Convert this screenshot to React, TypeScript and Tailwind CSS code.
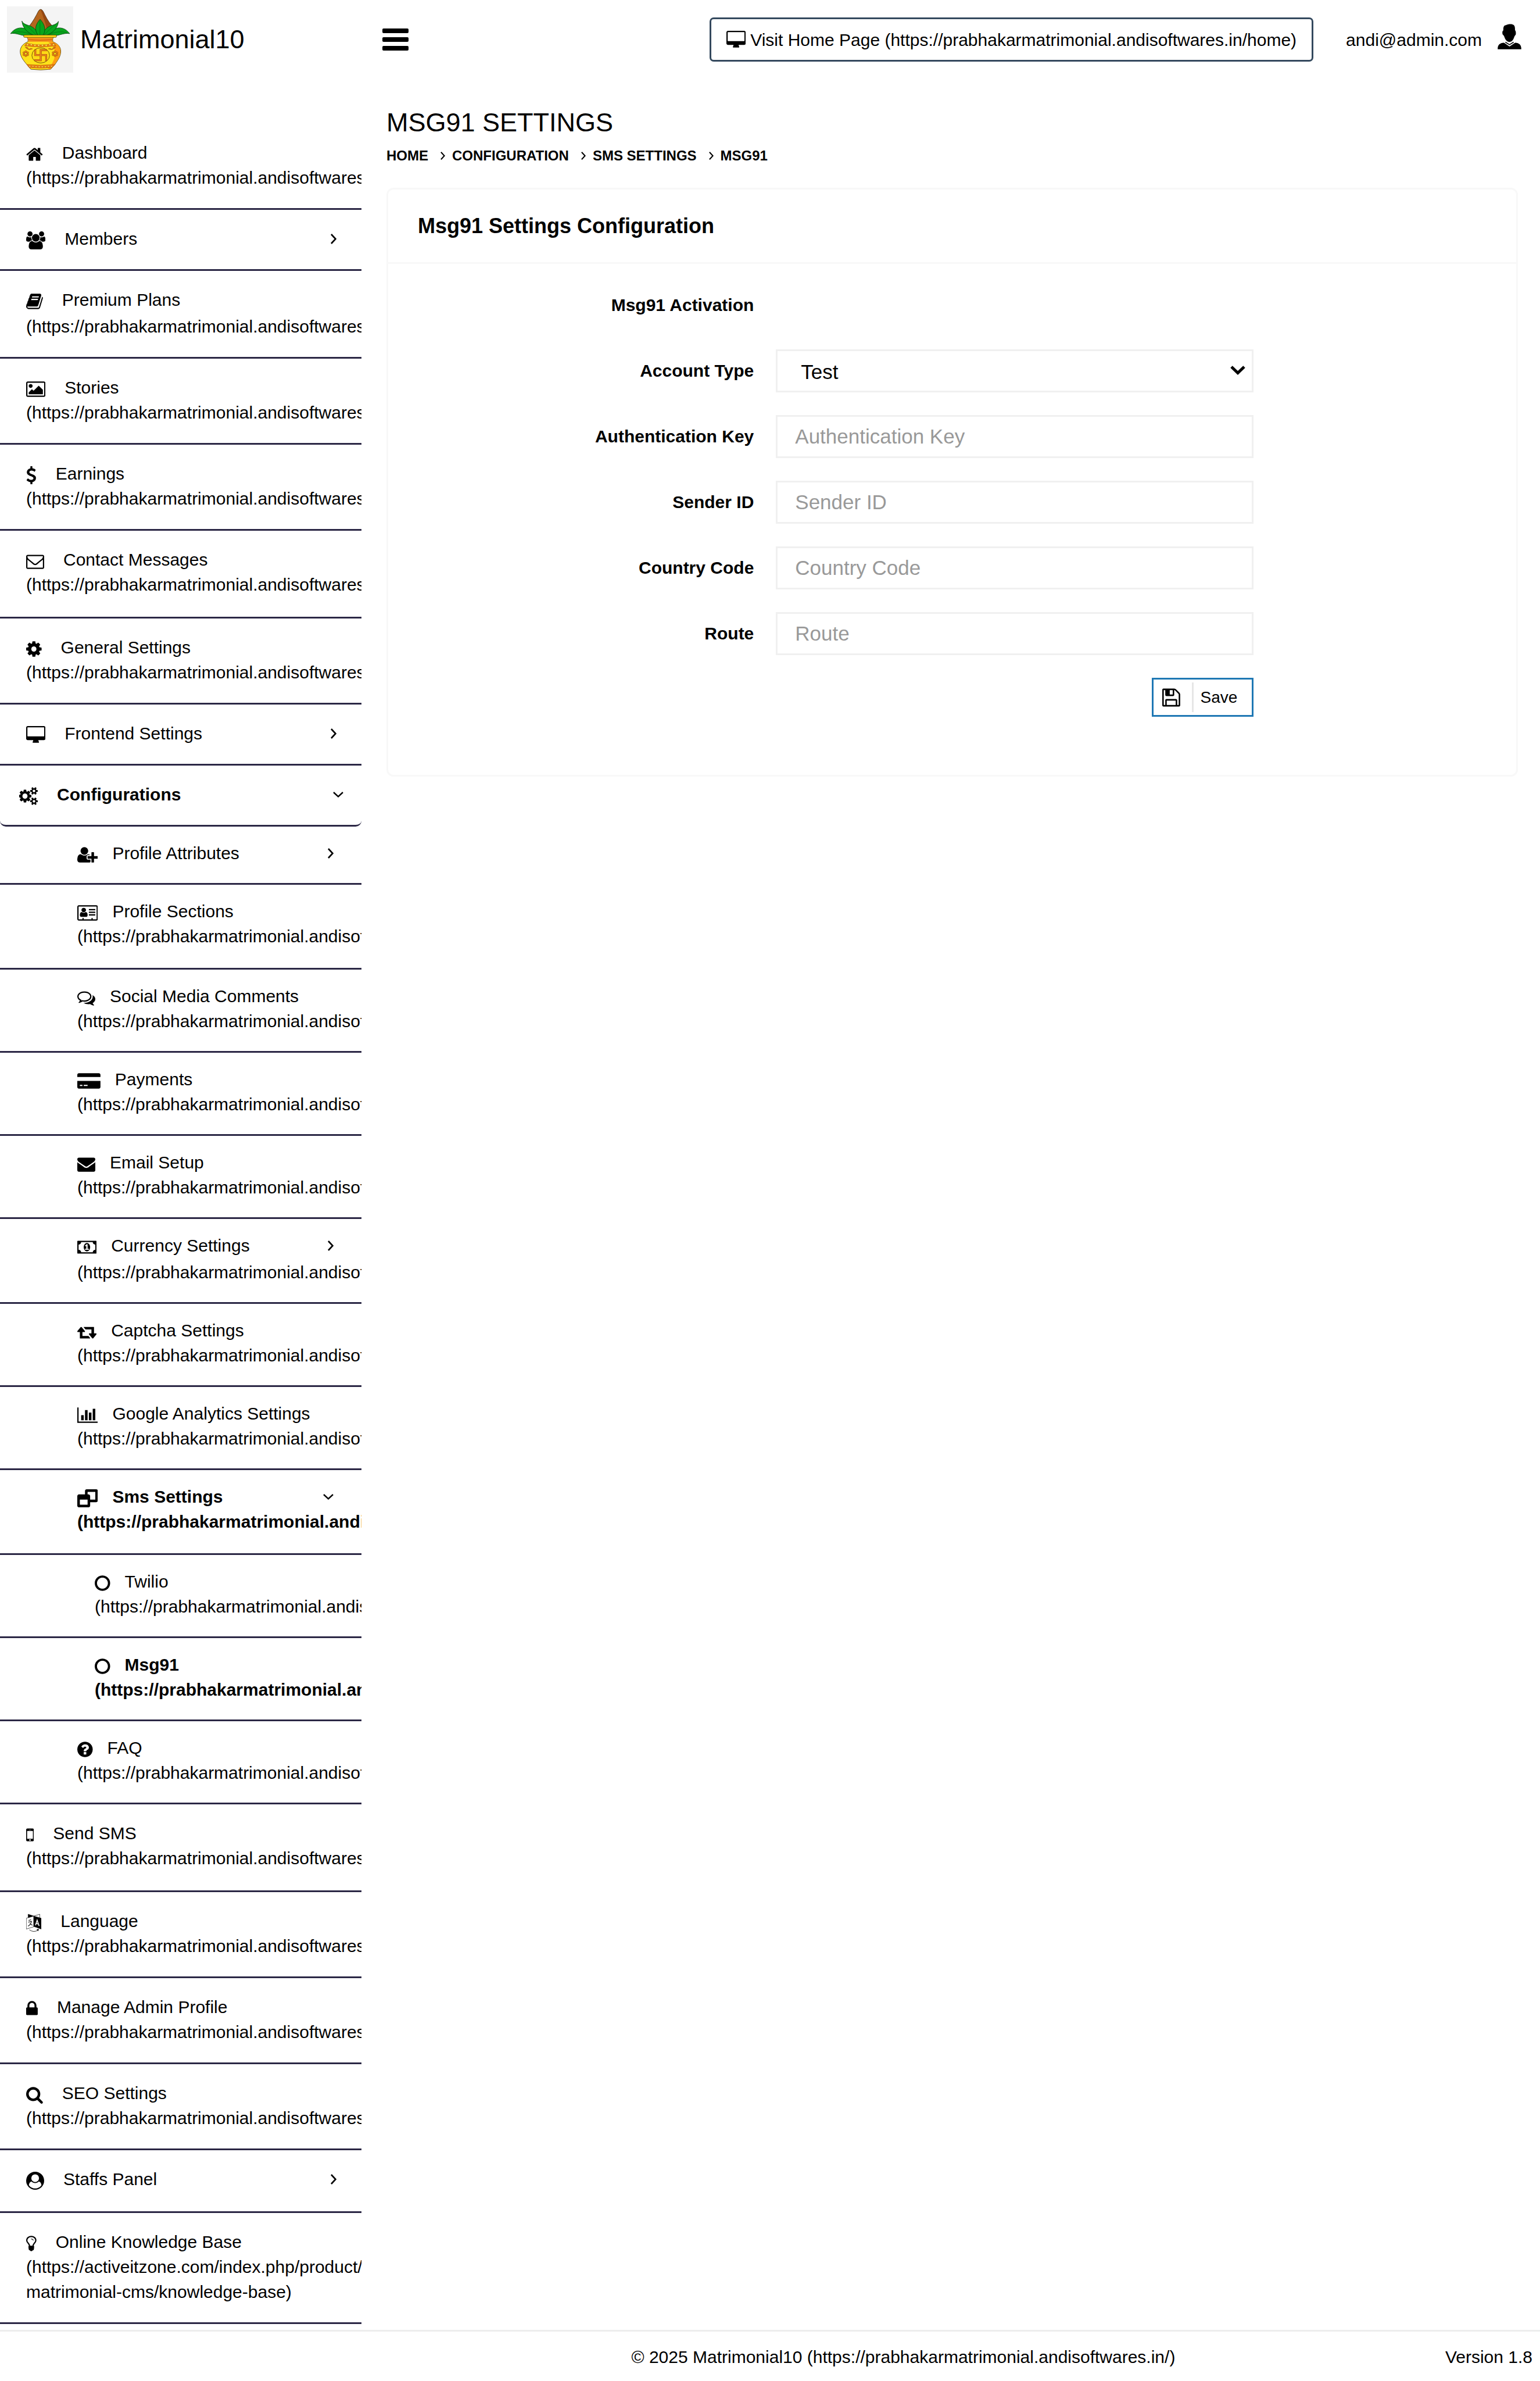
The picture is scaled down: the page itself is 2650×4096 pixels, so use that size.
import React from "react";

type Glyph = { x: number; w: number; d: string };

const ICONS: Record<string, Glyph> = {
  home: { x: 64, w: 1664, d: "M1472 992v480q0 26-19 45t-45 19h-384v-384h-256v384h-384q-26 0-45-19t-19-45v-480q0-1 .5-3t.5-3l575-474 575 474q1 2 1 6zm223-69l-62 74q-8 9-21 11h-3q-13 0-21-7l-692-577-692 577q-12 8-24 7-13-2-21-11l-62-74q-8-10-7-23.5t11-21.5l719-599q32-26 76-26t76 26l244 204v-195q0-14 9-23t23-9h192q14 0 23 9t9 23v408l219 182q10 8 11 21.5t-7 23.5z" },
  users: { x: 64, w: 1920, d: "M657 896q-162 5-265 128h-134q-82 0-138-40.5t-56-118.5q0-353 124-353 6 0 43.5 21t97.5 42.5 119 21.5q67 0 133-23-5 37-5 66 0 139 81 256zm1071 637q0 120-73 189.5t-194 69.5h-874q-121 0-194-69.5t-73-189.5q0-53 3.5-103.5t14-109 26.5-108.5 43-97.5 62-81 85.5-53.5 111.5-20q10 0 43 21.5t73 48 107 48 135 21.5 135-21.5 107-48 73-48 43-21.5q61 0 111.5 20t85.5 53.5 62 81 43 97.5 26.5 108.5 14 109 3.5 103.5zm-1024-1277q0 106-75 181t-181 75-181-75-75-181 75-181 181-75 181 75 75 181zm704 384q0 159-112.5 271.5t-271.5 112.5-271.5-112.5-112.5-271.5 112.5-271.5 271.5-112.5 271.5 112.5 112.5 271.5zm576 225q0 78-56 118.5t-138 40.5h-134q-103-123-265-128 81-117 81-256 0-29-5-66 66 23 133 23 59 0 119-21.5t97.5-42.5 43.5-21q124 0 124 353zm-128-609q0 106-75 181t-181 75-181-75-75-181 75-181 181-75 181 75 75 181z" },
  book: { x: 64, w: 1664, d: "M1703 478q40 57 18 129l-275 906q-19 64-76.5 107.5t-122.5 43.5h-923q-77 0-148.5-53.5t-99.5-131.5q-24-67-2-127 0-4 3-27t4-37q1-8-3-21.5t-3-19.5q2-11 8-21t16.5-23.5 16.5-23.5q23-38 45-91.5t30-91.5q3-10 .5-30t-.5-28q3-11 17-28t17-23q21-36 42-92t25-90q1-9-2.5-32t.5-28q4-13 22-30.5t22-22.5q19-26 42.5-84.5t27.5-96.5q1-8-3-25.5t-2-26.5q2-8 9-18t18-23 17-21q8-12 16.5-30.5t15-35 16-36 19.5-32 26.5-23.5 36-11.5 47.5 5.5l-1 3q38-9 51-9h761q74 0 114 56t18 130l-274 906q-36 119-71.5 153.5t-128.5 34.5h-869q-27 0-38 15-11 16-1 43 24 70 144 70h923q29 0 56-15.5t35-41.5l300-987q7-22 5-57 38 15 59 43zm-1064 2q-4 13 2 22.5t20 9.5h608q13 0 25.5-9.5t16.5-22.5l21-64q4-13-2-22.5t-20-9.5h-608q-13 0-25.5 9.5t-16.5 22.5zm-83 256q-4 13 2 22.5t20 9.5h608q13 0 25.5-9.5t16.5-22.5l21-64q4-13-2-22.5t-20-9.5h-608q-13 0-25.5 9.5t-16.5 22.5z" },
  picture: { x: 64, w: 1920, d: "M704 576q0 80-56 136t-136 56-136-56-56-136 56-136 136-56 136 56 56 136zm1024 384v448h-1408v-192l320-320 160 160 512-512zm96-704h-1600q-13 0-22.5 9.5t-9.5 22.5v1216q0 13 9.5 22.5t22.5 9.5h1600q13 0 22.5-9.5t9.5-22.5v-1216q0-13-9.5-22.5t-22.5-9.5zm160 32v1216q0 66-47 113t-113 47h-1600q-66 0-113-47t-47-113v-1216q0-66 47-113t113-47h1600q66 0 113 47t47 113z" },
  dollar: { x: 384, w: 1024, d: "M1362 1185q0 153-99.5 263.5t-258.5 136.5v175q0 14-9 23t-23 9h-135q-13 0-22.5-9.5t-9.5-22.5v-175q-66-9-127.5-31t-101.5-44.5-74-48-46.5-37.5-17.5-18q-17-21-2-41l103-135q7-10 23-12 15-2 24 9l2 2q113 99 243 125 37 8 74 8 81 0 142.5-43t61.5-122q0-28-15-53t-33.5-42-58.5-37.5-66-32-80-32.5q-39-16-61.5-25t-61.5-26.5-62.5-31-56.5-35.5-53.5-42.5-43.5-49-35.5-58-21-66.5-8.5-78q0-138 98-242t255-134v-180q0-13 9.5-22.5t22.5-9.5h135q14 0 23 9t9 23v176q57 6 110.5 23t87 33.5 63.5 37.5 39 29 15 14q17 18 5 38l-81 146q-8 15-23 16-14 3-27-7-3-3-14.5-12t-39-26.5-58.5-32-74.5-26-85.5-11.5q-95 0-155 43t-60 111q0 26 8.5 48t29.5 41.5 39.5 33 56 31 60.5 27 70 27.5q53 20 81 31.5t76 35 75.5 42.5 62 50 53 63.5 31.5 76.5 13 94z" },
  envelopeO: { x: 0, w: 1792, d: "M1664 1504v-768q-32 36-69 66-268 206-426 338-51 43-83 67t-86.5 48.5-102.5 24.5h-2q-48 0-102.5-24.5t-86.5-48.5-83-67q-158-132-426-338-37-30-69-66v768q0 13 9.5 22.5t22.5 9.5h1472q13 0 22.5-9.5t9.5-22.5zm0-1051v-24.5l-.5-13-3-12.5-5.5-9-9-7.5-14-2.5h-1472q-13 0-22.5 9.5t-9.5 22.5q0 168 147 284 193 152 401 317 6 5 35 29.5t46 37.5 44.5 31.5 50.5 27.5 43 9h2q20 0 43-9t50.5-27.5 44.5-31.5 46-37.5 35-29.5q208-165 401-317 54-43 100.5-115.5t46.5-131.5zm128-37v1088q0 66-47 113t-113 47h-1472q-66 0-113-47t-47-113v-1088q0-66 47-113t113-47h1472q66 0 113 47t47 113z" },
  cog: { x: 128, w: 1536, d: "M1152 896q0-106-75-181t-181-75-181 75-75 181 75 181 181 75 181-75 75-181zm512-109v222q0 12-8 23t-20 13l-185 28q-19 54-39 91 35 50 107 138 10 12 10 25t-9 23q-27 37-99 108t-94 71q-12 0-26-9l-138-108q-44 23-91 38-16 136-29 186-7 28-36 28h-222q-14 0-24.5-8.5t-11.5-21.5l-28-184q-49-16-90-37l-141 107q-10 9-25 9-14 0-25-11-126-114-165-168-7-10-7-23 0-12 8-23 15-21 51-66.5t54-70.5q-27-50-41-99l-183-27q-13-2-21-12.5t-8-23.5v-222q0-12 8-23t19-13l186-28q14-46 39-92-40-57-107-138-10-12-10-24 0-10 9-23 26-36 98.5-107.5t94.5-71.5q13 0 26 10l138 107q44-23 91-38 16-136 29-186 7-28 36-28h222q14 0 24.5 8.5t11.5 21.5l28 184q49 16 90 37l142-107q9-9 24-9 13 0 25 10 129 119 165 170 7 8 7 22 0 12-8 23-15 21-51 66.5t-54 70.5q26 50 41 98l183 28q13 2 21 12.5t8 23.5z" },
  desktop: { x: 0, w: 1920, d: "M1792 992v-832q0-13-9.5-22.5t-22.5-9.5h-1600q-13 0-22.5 9.5t-9.5 22.5v832q0 13 9.5 22.5t22.5 9.5h1600q13 0 22.5-9.5t9.5-22.5zm128-832v1088q0 66-47 113t-113 47h-544q0 37 16 77.5t32 71 16 43.5q0 26-19 45t-45 19h-512q-26 0-45-19t-19-45q0-14 16-44t32-70 16-78h-544q-66 0-113-47t-47-113v-1088q0-66 47-113t113-47h1600q66 0 113 47t47 113z" },
  cogs: { x: 0, w: 1856, d: "M832 896q0-106-75-181t-181-75-181 75-75 181 75 181 181 75 181-75 75-181zm768 512q0-52-38-90t-90-38-90 38-38 90q0 53 37.5 90.5t90.5 37.5 90.5-37.5 37.5-90.5zm0-1024q0-52-38-90t-90-38-90 38-38 90q0 53 37.5 90.5t90.5 37.5 90.5-37.5 37.5-90.5zm-384 421v185q0 10-7 19.5t-16 10.5l-155 24q-11 35-32 76 34 48 90 115 7 11 7 20 0 12-7 19-23 30-82.5 89.5t-78.5 59.5q-11 0-21-7l-115-90q-37 19-77 31-11 108-23 155-7 24-30 24h-186q-11 0-20-7.5t-10-17.5l-23-153q-34-10-75-31l-118 89q-7 7-20 7-11 0-21-8-144-133-144-160 0-9 7-19 10-14 41-53t47-61q-23-44-35-82l-152-24q-10-1-17-9.5t-7-19.5v-185q0-10 7-19.5t16-10.5l155-24q11-35 32-76-34-48-90-115-7-11-7-20 0-12 7-20 22-30 82-89t79-59q11 0 21 7l115 90q34-18 77-32 11-108 23-154 7-24 30-24h186q11 0 20 7.5t10 17.5l23 153q34 10 75 31l118-89q8-7 20-7 11 0 21 8 144 133 144 160 0 8-7 19-12 16-42 54t-45 60q23 48 34 82l152 23q10 2 17 10.5t7 19.5zm640 533v140q0 16-149 31-12 27-30 52 51 113 51 138 0 4-4 7-122 71-124 71-8 0-46-47t-52-68q-20 2-30 2t-30-2q-14 21-52 68t-46 47q-2 0-124-71-4-3-4-7 0-25 51-138-18-25-30-52-149-15-149-31v-140q0-16 149-31 13-29 30-52-51-113-51-138 0-4 4-7 4-2 35-20t59-34 30-16q8 0 46 46.5t52 67.5q20-2 30-2t30 2q51-71 92-112l6-2q4 0 124 70 4 3 4 7 0 25-51 138 17 23 30 52 149 15 149 31zm0-1024v140q0 16-149 31-12 27-30 52 51 113 51 138 0 4-4 7-122 71-124 71-8 0-46-47t-52-68q-20 2-30 2t-30-2q-14 21-52 68t-46 47q-2 0-124-71-4-3-4-7 0-25 51-138-18-25-30-52-149-15-149-31v-140q0-16 149-31 13-29 30-52-51-113-51-138 0-4 4-7 4-2 35-20t59-34 30-16q8 0 46 46.5t52 67.5q20-2 30-2t30 2q51-71 92-112l6-2q4 0 124 70 4 3 4 7 0 25-51 138 17 23 30 52 149 15 149 31z" },
  userPlus: { x: 0, w: 2048, d: "M704 896q-159 0-271.5-112.5t-112.5-271.5 112.5-271.5 271.5-112.5 271.5 112.5 112.5 271.5-112.5 271.5-271.5 112.5zm960 128h352q13 0 22.5 9.5t9.5 22.5v192q0 13-9.5 22.5t-22.5 9.5h-352v352q0 13-9.5 22.5t-22.5 9.5h-192q-13 0-22.5-9.5t-9.5-22.5v-352h-352q-13 0-22.5-9.5t-9.5-22.5v-192q0-13 9.5-22.5t22.5-9.5h352v-352q0-13 9.5-22.5t22.5-9.5h192q13 0 22.5 9.5t9.5 22.5v352zm-736 224q0 52 38 90t90 38h256v238q-68 50-171 50h-874q-121 0-194-69t-73-190q0-53 3.5-103.5t14-109 26.5-108.5 43-97.5 62-81 85.5-53.5 111.5-20q19 0 39 17 79 61 154.5 91.5t164.5 30.5 164.5-30.5 154.5-91.5q20-17 39-17 132 0 217 96h-223q-52 0-90 38t-38 90v192z" },
  card: { x: 0, w: 2048, d: "M1024 1131q0-64-9-117.5t-29.5-103-60.5-78-97-28.5q-6 4-30 18t-37.5 21.5-35.5 17.5-43 14.5-42 4.5-42-4.5-43-14.5-35.5-17.5-37.5-21.5-30-18q-57 0-97 28.5t-60.5 78-29.5 103-9 117.5 37 106.5 91 42.5h512q54 0 91-42.5t37-106.5zm-157-520q0-94-66.5-160.5t-160.5-66.5-160.5 66.5-66.5 160.5 66.5 160.5 160.5 66.5 160.5-66.5 66.5-160.5zm925 509v-64q0-14-9-23t-23-9h-576q-14 0-23 9t-9 23v64q0 14 9 23t23 9h576q14 0 23-9t9-23zm0-260v-56q0-15-10.5-25.5t-25.5-10.5h-568q-15 0-25.5 10.5t-10.5 25.5v56q0 15 10.5 25.5t25.5 10.5h568q15 0 25.5-10.5t10.5-25.5zm0-252v-64q0-14-9-23t-23-9h-576q-14 0-23 9t-9 23v64q0 14 9 23t23 9h576q14 0 23-9t9-23zM1920 1504v-1216q0-13-9.5-22.5t-22.5-9.5h-1728q-13 0-22.5 9.5t-9.5 22.5v1216q0 13 9.5 22.5t22.5 9.5h352v-96q0-14 9-23t23-9h64q14 0 23 9t9 23v96h768v-96q0-14 9-23t23-9h64q14 0 23 9t9 23v96h352q13 0 22.5-9.5t9.5-22.5zm128-1216v1216q0 66-47 113t-113 47h-1728q-66 0-113-47t-47-113v-1216q0-66 47-113t113-47h1728q66 0 113 47t47 113z" },
  comments: { x: 0, w: 1792, d: "M704 384q-153 0-286 52t-211.5 141-78.5 191q0 82 53 158t149 132l97 56-35 84q34-20 62-39l44-31 53 10q78 14 153 14 153 0 286-52t211.5-141 78.5-191-78.5-191-211.5-141-286-52zm0-128q191 0 353.5 68.5t256.5 186.5 94 257-94 257-256.5 186.5-353.5 68.5q-86 0-176-16-124 88-278 128-36 9-86 16h-3q-11 0-20.5-8t-11.5-21q-1-3-1-6.5t.5-6.5 2-6l2.5-5 3.5-5.5 4-5 4.5-5 4-4.5q5-6 23-25t26-29.5 22.5-29 25-38.5 20.5-44q-124-72-195-177t-71-224q0-139 94-257t256.5-186.5 353.5-68.5zm822 1169q10 24 20.5 44t25 38.5 22.5 29 26 29.5 23 25q1 1 4 4.5t4.5 5 4 5 3.5 5.5l2.5 5 2 6 .5 6.5-1 6.5q-3 14-13 22t-22 7q-50-7-86-16-154-40-278-128-90 16-176 16-271 0-472-132 58 4 88 4 161 0 309-45t264-129q125-92 192-212t67-254q0-77-23-152 129 71 204 178t75 230q0 120-71 224.5t-195 176.5z" },
  creditCard: { x: 0, w: 2304, d: "M0 1504v-608h2304v608q0 66-47 113t-113 47h-1984q-66 0-113-47t-47-113zm640-224v128h384v-128h-384zm-384 0v128h256v-128h-256zm1888-1152q66 0 113 47t47 113v224h-2304v-224q0-66 47-113t113-47h1984z" },
  envelope: { x: 0, w: 1792, d: "M1792 710v794q0 66-47 113t-113 47h-1472q-66 0-113-47t-47-113v-794q44 49 101 87 362 246 497 345 57 42 92.5 65.5t94.5 48 110 24.5h2q51 0 110-24.5t94.5-48 92.5-65.5q170-123 498-345 57-39 100-87zm0-294q0 79-49 151t-122 123q-376 261-468 325-10 7-42.5 31t-54 38.5-52 32.5-57.5 27-50 9h-2q-23 0-50-9t-57.5-27-52-32.5-54-38.5-42.5-31q-91-64-262-182.5t-205-142.5q-62-42-117-115.5t-55-136.5q0-78 41.5-130t118.5-52h1472q65 0 112.5 47t47.5 113z" },
  money: { x: 0, w: 1920, d: "M768 1152h384v-96h-128v-448h-114l-148 137 77 80q42-37 55-57h2v288h-128v96zm512-256q0 70-21 142t-59.5 134-101.5 101-138 39-138-39-101.5-101-59.5-134-21-142 21-142 59.5-134 101.5-101 138-39 138 39 101.5 101 59.5 134 21 142zm512 256v-512q-106 0-181-75t-75-181h-1152q0 106-75 181t-181 75v512q106 0 181 75t75 181h1152q0-106 75-181t181-75zm128-832v1152q0 26-19 45t-45 19h-1792q-26 0-45-19t-19-45v-1152q0-26 19-45t45-19h1792q26 0 45 19t19 45z" },
  retweet: { x: 0, w: 1920, d: "M1280 1504q0 13-9.5 22.5t-22.5 9.5h-960q-8 0-13.5-2t-9-7-5.5-8-3-11.5-1-11.5v-600h-192q-26 0-45-19t-19-45q0-24 15-41l320-384q19-22 49-22t49 22l320 384q15 17 15 41 0 26-19 45t-45 19h-192v384h576q16 0 25 11l160 192q7 10 7 21zm640-416q0 24-15 41l-320 384q-20 23-49 23t-49-23l-320-384q-15-17-15-41 0-26 19-45t45-19h192v-384h-576q-16 0-25-12l-160-192q-7-9-7-20 0-13 9.5-22.5t22.5-9.5h960q8 0 13.5 2t9 7 5.5 8 3 11.5 1 11.5v600h192q26 0 45 19t19 45z" },
  chart: { x: 0, w: 2048, d: "M640 896v512h-256v-512h256zm384-512v1024h-256v-1024h256zm1024 1152v128h-2048v-1536h128v1408h1920zm-640-896v768h-256v-768h256zm384-384v1152h-256v-1152h256z" },
  windows: { x: 0, w: 2048, d: "M256 1536h768v-512h-768v512zm1024-512h512v-768h-768v256h96q66 0 113 47t47 113v352zm768-864v960q0 66-47 113t-113 47h-608v352q0 66-47 113t-113 47h-960q-66 0-113-47t-47-113v-960q0-66 47-113t113-47h608v-352q0-66 47-113t113-47h960q66 0 113 47t47 113z" },
  circle: { x: 128, w: 1536, d: "M896 352q-148 0-273 73t-198 198-73 273 73 273 198 198 273 73 273-73 198-198 73-273-73-273-198-198-273-73zm768 544q0 209-103 385.5t-279.5 279.5-385.5 103-385.5-103-279.5-279.5-103-385.5 103-385.5 279.5-279.5 385.5-103 385.5 103 279.5 279.5 103 385.5z" },
  question: { x: 128, w: 1536, d: "M1024 1376v-192q0-14-9-23t-23-9h-192q-14 0-23 9t-9 23v192q0 14 9 23t23 9h192q14 0 23-9t9-23zm256-672q0-88-55.5-163t-138.5-116-170-41q-243 0-371 213-15 24 8 42l132 100q7 6 19 6 16 0 25-12 53-68 86-92 34-24 86-24 48 0 85.5 26t37.5 59q0 38-20 61t-68 45q-63 28-115.5 86.5t-52.5 125.5v36q0 14 9 23t23 9h192q14 0 23-9t9-23q0-19 21.5-49.5t54.5-49.5q32-18 49-28.5t46-35 44.5-48 28-60.5 12.5-81zm384 192q0 209-103 385.5t-279.5 279.5-385.5 103-385.5-103-279.5-279.5-103-385.5 103-385.5 279.5-279.5 385.5-103 385.5 103 279.5 279.5 103 385.5z" },
  mobile: { x: 512, w: 768, d: "M976 1408q0-33-23.5-56.5t-56.5-23.5-56.5 23.5-23.5 56.5 23.5 56.5 56.5 23.5 56.5-23.5 23.5-56.5zm208-160v-704q0-13-9.5-22.5t-22.5-9.5h-512q-13 0-22.5 9.5t-9.5 22.5v704q0 13 9.5 22.5t22.5 9.5h512q13 0 22.5-9.5t9.5-22.5zm-192-848q0-16-16-16h-160q-16 0-16 16t16 16h160q16 0 16-16zm288-16v1024q0 52-38 90t-90 38h-512q-52 0-90-38t-38-90v-1024q0-52 38-90t90-38h512q52 0 90 38t38 90z" },
  lock: { x: 320, w: 1152, d: "M640 768h512v-192q0-106-75-181t-181-75-181 75-75 181v192zm832 96v576q0 40-28 68t-68 28h-960q-40 0-68-28t-28-68v-576q0-40 28-68t68-28h32v-192q0-184 132-316t316-132 316 132 132 316v192h32q40 0 68 28t28 68z" },
  search: { x: 64, w: 1664, d: "M1216 832q0-185-131.5-316.5t-316.5-131.5-316.5 131.5-131.5 316.5 131.5 316.5 316.5 131.5 316.5-131.5 131.5-316.5zm512 832q0 52-38 90t-90 38q-54 0-90-38l-343-342q-179 124-399 124-143 0-273.5-55.5t-225-150-150-225-55.5-273.5 55.5-273.5 150-225 225-150 273.5-55.5 273.5 55.5 225 150 150 225 55.5 273.5q0 220-124 399l343 343q37 37 37 90z" },
  userCircle: { x: 0, w: 1792, d: "M1523 1339q-22-155-87.5-257.5t-184.5-118.5q-67 74-159.5 115.5t-195.5 41.5-195.5-41.5-159.5-115.5q-119 16-184.5 118.5t-87.5 257.5q106 150 271 237.5t356 87.5 356-87.5 271-237.5zm-243-699q0-159-112.5-271.5t-271.5-112.5-271.5 112.5-112.5 271.5 112.5 271.5 271.5 112.5 271.5-112.5 112.5-271.5zm512 256q0 182-71 347.5t-190.5 286-285.5 191.5-349 71q-182 0-348-71t-286-191-191-286-71-348 71-348 191-286 286-191 348-71 348 71 286 191 191 286 71 348z" },
  bulb: { x: 384, w: 1024, d: "M1120 576q0 13-9.5 22.5t-22.5 9.5-22.5-9.5-9.5-22.5q0-46-54-71t-106-25q-13 0-22.5-9.5t-9.5-22.5 9.5-22.5 22.5-9.5q50 0 99.5 16t87 54 37.5 90zm160 0q0-72-34.5-134t-90-101.5-123-62-136.5-22.5-136.5 22.5-123 62-90 101.5-34.5 134q0 101 68 180 10 11 30.5 33t30.5 33q128 153 141 298h228q13-145 141-298 10-11 30.5-33t30.5-33q68-79 68-180zm128 0q0 155-103 268-45 49-74.5 87t-59.5 95.5-34 107.5q47 28 47 82 0 37-25 64 25 27 25 64 0 52-45 81 13 23 13 47 0 46-31.5 71t-77.5 25q-20 44-60 70t-87 26-87-26-60-70q-46 0-77.5-25t-31.5-71q0-24 13-47-45-29-45-81 0-37 25-64-25-27-25-64 0-54 47-82-4-50-34-107.5t-59.5-95.5-74.5-87q-103-113-103-268 0-99 44.5-184.5t117-142 164-89 186.5-32.5 186.5 32.5 164 89 117 142 44.5 184.5z" },
  floppy: { x: 128, w: 1536, d: "M512 1536h768v-384h-768v384zm896 0h128v-896q0-14-10-38.5t-20-34.5l-281-281q-10-10-34-20t-39-10v416q0 40-28 68t-68 28h-576q-40 0-68-28t-28-68v-416h-128v1280h128v-416q0-40 28-68t68-28h832q40 0 68 28t28 68v416zm-384-928v-320q0-13-9.5-22.5t-22.5-9.5h-192q-13 0-22.5 9.5t-9.5 22.5v320q0 13 9.5 22.5t22.5 9.5h192q13 0 22.5-9.5t9.5-22.5zm640 32v928q0 40-28 68t-68 28h-1344q-40 0-68-28t-28-68v-1344q0-40 28-68t68-28h928q40 0 88 20t76 48l280 280q28 28 48 76t20 88z" },
};

function Icon({ name, className = "h-[30px]" }: { name: string; className?: string }) {
  if (name === "language") {
    return (
      <svg viewBox="48 54 100 118" className={`w-auto shrink-0 ${className}`} fill="none" stroke="#000" strokeWidth="2.5" aria-hidden="true">
        <path d="M61 58L98 70L61 82Z" fill="#000" />
        <path d="M98 70L137 58V82" />
        <path d="M49 84L98 70V140L49 155Z" fill="#fff" />
        <path d="M98 70L147 84V155L98 138Z" fill="#000" />
        <path d="M109 130L120 97L133 135M113 119L129 122" stroke="#fff" strokeWidth="6" />
        <path d="M64 99L80 94M62 110L83 104C80 120 72 130 60 136M72 118L89 130" strokeWidth="4" />
        <path d="M69 160Q98 180 126 162" strokeWidth="3" />
        <path d="M118 158L130 156L126 167Z" fill="#000" />
      </svg>
    );
  }
  const g = ICONS[name];
  return (
    <svg viewBox={`${g.x} 0 ${g.w} 1792`} className={`w-auto shrink-0 ${className}`} fill="currentColor" fillRule="evenodd" aria-hidden="true">
      <path d={g.d} />
    </svg>
  );
}

function ChevronRight({ className = "h-[18px] w-[10px]" }: { className?: string }) {
  return (
    <svg viewBox="0 0 10 18" className={`shrink-0 ${className}`} fill="none" stroke="currentColor" strokeWidth="2.6" aria-hidden="true">
      <path d="M1 1L8.4 9L1 17" />
    </svg>
  );
}

function ChevronDown() {
  return (
    <svg viewBox="0 0 18 10" className="h-[10px] w-[18px] shrink-0" fill="none" stroke="currentColor" strokeWidth="2.4" aria-hidden="true">
      <path d="M1 1L9 8.4L17 1" />
    </svg>
  );
}

function KalashLogo() {
  const dots = [0, 1, 2, 3, 4, 5, 6, 7];
  return (
    <svg viewBox="45 45 426 426" className="size-[114px] shrink-0" role="img" aria-label="Matrimonial10 logo">
      <rect x="45" y="45" width="426" height="426" fill="#f4f4f4" />
      <path d="M188 172C214 140 232 106 247 76Q262 52 277 76C292 106 308 140 332 166L310 196H210Z" fill="#b5651d" stroke="#3a2410" strokeWidth="3" />
      <path d="M262 68Q272 68 277 78C292 108 308 140 330 166L300 184C292 150 276 106 262 68Z" fill="#8f3f0e" opacity="0.75" />
      <g fill="#08a51c" stroke="#06400c" strokeWidth="3" strokeLinejoin="round">
        <path d="M68 220C92 186 130 174 168 190C200 202 222 214 234 233H160C130 230 100 214 68 220Z" />
        <path d="M448 220C424 186 386 174 350 190C318 202 296 214 282 233H356C386 230 416 214 448 220Z" />
        <path d="M141 139C150 160 176 164 198 172C226 186 240 206 248 233H222C182 216 146 190 141 139Z" />
        <path d="M376 141C366 160 342 164 320 172C292 186 278 206 270 233H296C336 216 372 190 376 141Z" />
        <path d="M258 128C238 150 228 172 230 194C232 212 240 224 246 234H274C284 222 288 208 288 192C288 168 276 148 258 128Z" />
      </g>
      <path d="M257 136V232M150 152Q196 186 236 232M368 152Q322 186 280 232M84 214Q150 196 210 232M432 214Q370 196 306 232" fill="none" stroke="#067012" strokeWidth="3" />
      <path d="M172 240H344Q336 256 340 272C370 284 392 304 391 336C390 370 368 396 354 418L326 449Q261 458 198 449L172 418C154 396 131 370 130 336C130 304 150 284 180 272Q184 256 172 240Z" fill="#ffe21a" stroke="#50320a" strokeWidth="3" />
      <path d="M340 273C369 285 390 304 389 336C388 370 366 396 352 418L325 447L306 450C334 420 360 380 352 330C350 306 330 286 310 274Z" fill="#ff9c12" />
      <path d="M178 248H338L336 272H184Z" fill="#f28a1c" />
      <path d="M180 257Q258 268 338 257" fill="none" stroke="#d65f0c" strokeWidth="4" />
      <path d="M170 282Q260 302 350 282L360 298Q260 312 158 298Z" fill="#ef7d16" stroke="#a34d05" strokeWidth="2" />
      <path d="M172 418Q260 428 352 418L336 438Q260 446 188 438Z" fill="#ef7d16" stroke="#a34d05" strokeWidth="2" />
      <g fill="#ffe95a" stroke="#9a5208" strokeWidth="1.5">
        {dots.map((i) => (
          <circle key={`u${i}`} cx={177 + i * 24} cy={291 + (i > 1 && i < 6 ? 4 : 0)} r="6" />
        ))}
        {dots.map((i) => (
          <circle key={`l${i}`} cx={192 + i * 20} cy={430 + (i > 1 && i < 6 ? 3 : 0)} r="5" />
        ))}
      </g>
      <rect x="152" y="229" width="212" height="15" rx="7" fill="#ffd91a" stroke="#50320a" strokeWidth="3" />
      <path d="M162 306Q180 304 186 322Q194 310 210 318Q192 326 182 322Q168 318 162 306ZM358 306Q342 304 334 322Q326 310 310 318Q328 326 338 322Q352 318 358 306Z" fill="#d9701a" stroke="#7c3d04" strokeWidth="1.5" />
      {[166, 354].map((cx) => (
        <g key={cx} fill="#ea8216" stroke="#7c3d04" strokeWidth="1.5">
          {[[0, -13], [12, -6], [12, 7], [0, 13], [-12, 7], [-12, -6]].map(([dx, dy]) => (
            <circle key={`${dx},${dy}`} cx={cx + dx} cy={349 + dy} r="7" />
          ))}
          <circle cx={cx} cy="349" r="7" fill="#ffe21a" />
        </g>
      ))}
      <ellipse cx="262" cy="360" rx="57" ry="49" fill="#ffd916" stroke="#50320a" strokeWidth="3" />
      <path d="M227 321V358H297V396M303 326H262V391H221" fill="none" stroke="#9a4a08" strokeWidth="12" />
      <path d="M227 323V358H297V394M301 326H262V391H223" fill="none" stroke="#e9801c" strokeWidth="8" />
    </svg>
  );
}

function UserIcon() {
  return (
    <svg viewBox="55 62 156 166" className="mb-[10px] h-[44px] w-[41px] shrink-0" role="img" aria-label="Account">
      <path d="M93 104C91 80 98 71 110 70C120 64 140 62 152 65C166 68 170 80 169 103C175 105 176 125 174 132C170 138 166 140 164 148C158 168 146 180 133 180C118 180 105 166 100 148C97 142 96 138 91 134C85 130 84 106 93 104Z" />
      <path d="M106 181L133 198L160 181" fill="none" stroke="#000" strokeWidth="6" />
      <path d="M56 228C54 202 68 186 97 185L133 210L170 185C198 186 212 202 210 228Z" />
    </svg>
  );
}

const SITE = "https://prabhakarmatrimonial.andisoftwares.in";

type Item = {
  icon: string;
  label: string;
  url?: string;
  urlLines?: string[];
  level?: 0 | 1 | 2;
  bold?: boolean;
  chevron?: "right" | "down";
  open?: boolean;
  lead?: boolean;
  low?: boolean;
};

const ITEMS: Item[] = [
  { icon: "home", label: "Dashboard", url: `${SITE}/admin` },
  { icon: "users", label: "Members", chevron: "right" },
  { icon: "book", label: "Premium Plans", url: `${SITE}/admin/packages`, lead: true },
  { icon: "picture", label: "Stories", url: `${SITE}/admin/stories` },
  { icon: "dollar", label: "Earnings", url: `${SITE}/admin/earnings` },
  { icon: "envelopeO", label: "Contact Messages", url: `${SITE}/admin/contact_messages`, low: true },
  { icon: "cog", label: "General Settings", url: `${SITE}/admin/general_settings` },
  { icon: "desktop", label: "Frontend Settings", chevron: "right" },
  { icon: "cogs", label: "Configurations", chevron: "down", bold: true, open: true },
  { icon: "userPlus", label: "Profile Attributes", level: 1, chevron: "right" },
  { icon: "card", label: "Profile Sections", level: 1, url: `${SITE}/admin/profile_sections`, low: true },
  { icon: "comments", label: "Social Media Comments", level: 1, url: `${SITE}/admin/social_media_comments` },
  { icon: "creditCard", label: "Payments", level: 1, url: `${SITE}/admin/payments` },
  { icon: "envelope", label: "Email Setup", level: 1, url: `${SITE}/admin/email_setup` },
  { icon: "money", label: "Currency Settings", level: 1, url: `${SITE}/admin/currency_settings`, chevron: "right", lead: true },
  { icon: "retweet", label: "Captcha Settings", level: 1, url: `${SITE}/admin/captcha_settings` },
  { icon: "chart", label: "Google Analytics Settings", level: 1, url: `${SITE}/admin/google_analytics_settings` },
  { icon: "windows", label: "Sms Settings", level: 1, url: `${SITE}/admin/sms_settings`, bold: true, chevron: "down", low: true },
  { icon: "circle", label: "Twilio", level: 2, url: `${SITE}/admin/twilio` },
  { icon: "circle", label: "Msg91", level: 2, url: `${SITE}/admin/msg91`, bold: true },
  { icon: "question", label: "FAQ", level: 1, url: `${SITE}/admin/faq` },
  { icon: "mobile", label: "Send SMS", url: `${SITE}/admin/send_sms`, low: true },
  { icon: "language", label: "Language", url: `${SITE}/admin/language` },
  { icon: "lock", label: "Manage Admin Profile", url: `${SITE}/admin/profile` },
  { icon: "search", label: "SEO Settings", url: `${SITE}/admin/seo_settings` },
  { icon: "userCircle", label: "Staffs Panel", chevron: "right", low: true },
  {
    icon: "bulb",
    label: "Online Knowledge Base",
    urlLines: ["(https://activeitzone.com/index.php/product/active-", "matrimonial-cms/knowledge-base)"],
  },
];

function NavItem({ item }: { item: Item }) {
  const level = item.level ?? 0;
  const box = item.open
    ? "rounded-b-[10px] pl-[33px] pr-[31px] pt-[28px]"
    : level === 0
      ? "pl-[45px] pr-[43px] pt-[28px]"
      : level === 1
        ? "pl-[133px] pr-[48px] pt-[24px]"
        : "pl-[163px] pr-[48px] pt-[24px]";
  const bottom = level === 0 ? (item.low ? "pb-[34px]" : "pb-[31px]") : item.low ? "pb-[33px]" : "pb-[30px]";
  const lines = item.urlLines ?? (item.url ? [`(${item.url})`] : []);
  return (
    <li>
      <a
        href={item.url ?? "#"}
        className={`block whitespace-nowrap border-b-[3px] border-[#2b2745] ${box} ${bottom} ${item.bold ? "font-bold" : ""}`}
      >
        <span className={`flex h-[43px] items-center ${item.lead ? "mb-[3px]" : ""}`}>
          <Icon name={item.icon} className="mt-[5px] h-[31px]" />
          <span className={level === 0 ? "ml-[33px]" : "ml-[25px]"}>{item.label}</span>
          <span className="ml-auto">{item.chevron === "right" ? <ChevronRight /> : item.chevron === "down" ? <ChevronDown /> : null}</span>
        </span>
        {lines.map((line) => (
          <span key={line} className="block">
            {line}
          </span>
        ))}
      </a>
    </li>
  );
}

const FORM_ROW = "grid min-h-[74px] grid-cols-[630fr_823fr_414fr] gap-x-[38px]";
const LABEL = "pt-[15px] text-right font-bold";
const FIELD = "h-[74px] w-full border-[3px] border-[#f0f0f0] bg-white text-[35px] leading-[43px] text-black outline-none";

function TextRow({ id, label }: { id: string; label: string }) {
  return (
    <div className={FORM_ROW}>
      <label htmlFor={id} className={LABEL}>
        {label}
      </label>
      <input id={id} type="text" placeholder={label} className={`${FIELD} px-[30px] placeholder:text-[#999999]`} />
    </div>
  );
}

export default function App() {
  const crumbs = ["HOME", "CONFIGURATION", "SMS SETTINGS", "MSG91"];
  return (
    <div className="flex min-h-screen flex-col bg-white font-['Liberation_Sans',Arial,sans-serif] text-[30px] leading-[43px] text-black">
      <header className="flex h-[136px] items-center">
        <a href={SITE} className="flex w-[622px] shrink-0 items-center gap-[12px] pl-[12px]">
          <KalashLogo />
          <span className="text-[45px] leading-[50px]">Matrimonial10</span>
        </a>
        <button type="button" aria-label="Toggle menu" className="ml-[36px]">
          <svg viewBox="0 0 45 38" className="h-[38px] w-[45px]" aria-hidden="true">
            <rect width="45" height="8" rx="2" />
            <rect y="15" width="45" height="8" rx="2" />
            <rect y="30" width="45" height="8" rx="2" />
          </svg>
        </button>
        <a
          href={`${SITE}/home`}
          className="ml-auto flex h-[76px] items-center gap-[8px] rounded-[7px] border-[3px] border-[#34495e] px-[26px]"
        >
          <Icon name="desktop" className="h-[31px]" />
          <span>Visit Home Page (https://prabhakarmatrimonial.andisoftwares.in/home)</span>
        </a>
        <a href="#account" className="ml-[56px] mr-[32px] flex items-center gap-[27px]">
          <span>andi@admin.com</span>
          <UserIcon />
        </a>
      </header>

      <div className="flex flex-1">
        <aside className="w-[622px] shrink-0 overflow-hidden pb-[10px] pt-[77px]">
          <nav aria-label="Main">
            <ul>
              {ITEMS.map((item) => (
                <NavItem key={item.label} item={item} />
              ))}
            </ul>
          </nav>
        </aside>

        <main className="min-w-0 flex-1 pl-[43px] pr-[38px] pt-[50px]">
          <h1 className="text-[45px] leading-[50px]">MSG91 SETTINGS</h1>
          <ol className="mt-[15px] flex items-center text-[24px] font-bold leading-[34px]">
            {crumbs.map((c, i) => (
              <li key={c} className="flex items-center">
                {i > 0 && (
                  <span className="pl-[21px] pr-[12px]">
                    <ChevronRight className="h-[14px] w-[8px]" />
                  </span>
                )}
                <a href="#">{c}</a>
              </li>
            ))}
          </ol>

          <section className="mt-[38px] rounded-[12px] border-[3px] border-[#f8f8f8]">
            <h2 className="border-b-[3px] border-[#f8f8f8] px-[51px] pb-[41px] pt-[41px] text-[36px] font-bold leading-[43px]">
              Msg91 Settings Configuration
            </h2>
            <form className="flex flex-col gap-[39px] pb-[100px] pt-[34px]" onSubmit={(e) => e.preventDefault()}>
              <div className={FORM_ROW}>
                <span className={LABEL}>Msg91 Activation</span>
              </div>
              <div className={FORM_ROW}>
                <label htmlFor="account-type" className={LABEL}>
                  Account Type
                </label>
                <div className="relative">
                  <select id="account-type" className={`${FIELD} appearance-none px-[40px] pt-[3px]`} defaultValue="Test">
                    <option>Test</option>
                    <option>Live</option>
                  </select>
                  <svg viewBox="0 0 26 16" className="pointer-events-none absolute right-[14px] top-[28px] h-[16px] w-[26px]" fill="none" stroke="#000" strokeWidth="5" aria-hidden="true">
                    <path d="M2 2L13 12.5L24 2" />
                  </svg>
                </div>
              </div>
              <TextRow id="auth-key" label="Authentication Key" />
              <TextRow id="sender-id" label="Sender ID" />
              <TextRow id="country-code" label="Country Code" />
              <TextRow id="route" label="Route" />
              <div className="grid grid-cols-[630fr_823fr_414fr] gap-x-[38px]">
                <button
                  type="submit"
                  className="col-start-2 flex h-[67px] items-center justify-self-end border-[3px] border-[#1f78b4] pl-[15px] pr-[25px] text-[28px]"
                >
                  <Icon name="floppy" className="h-[36px]" />
                  <span className="ml-[20px] mr-[12px] h-[51px] w-[3px] bg-[#e6e6e6]" />
                  Save
                </button>
              </div>
            </form>
          </section>
        </main>
      </div>

      <footer className="flex border-t-[3px] border-[#ededed] pb-[20px] pl-[622px] pr-[13px] pt-[22px]">
        <p className="flex-1 text-center">
          © 2025 Matrimonial10 <a href={SITE}>(https://prabhakarmatrimonial.andisoftwares.in/)</a>
        </p>
        <p>Version 1.8</p>
      </footer>
    </div>
  );
}
